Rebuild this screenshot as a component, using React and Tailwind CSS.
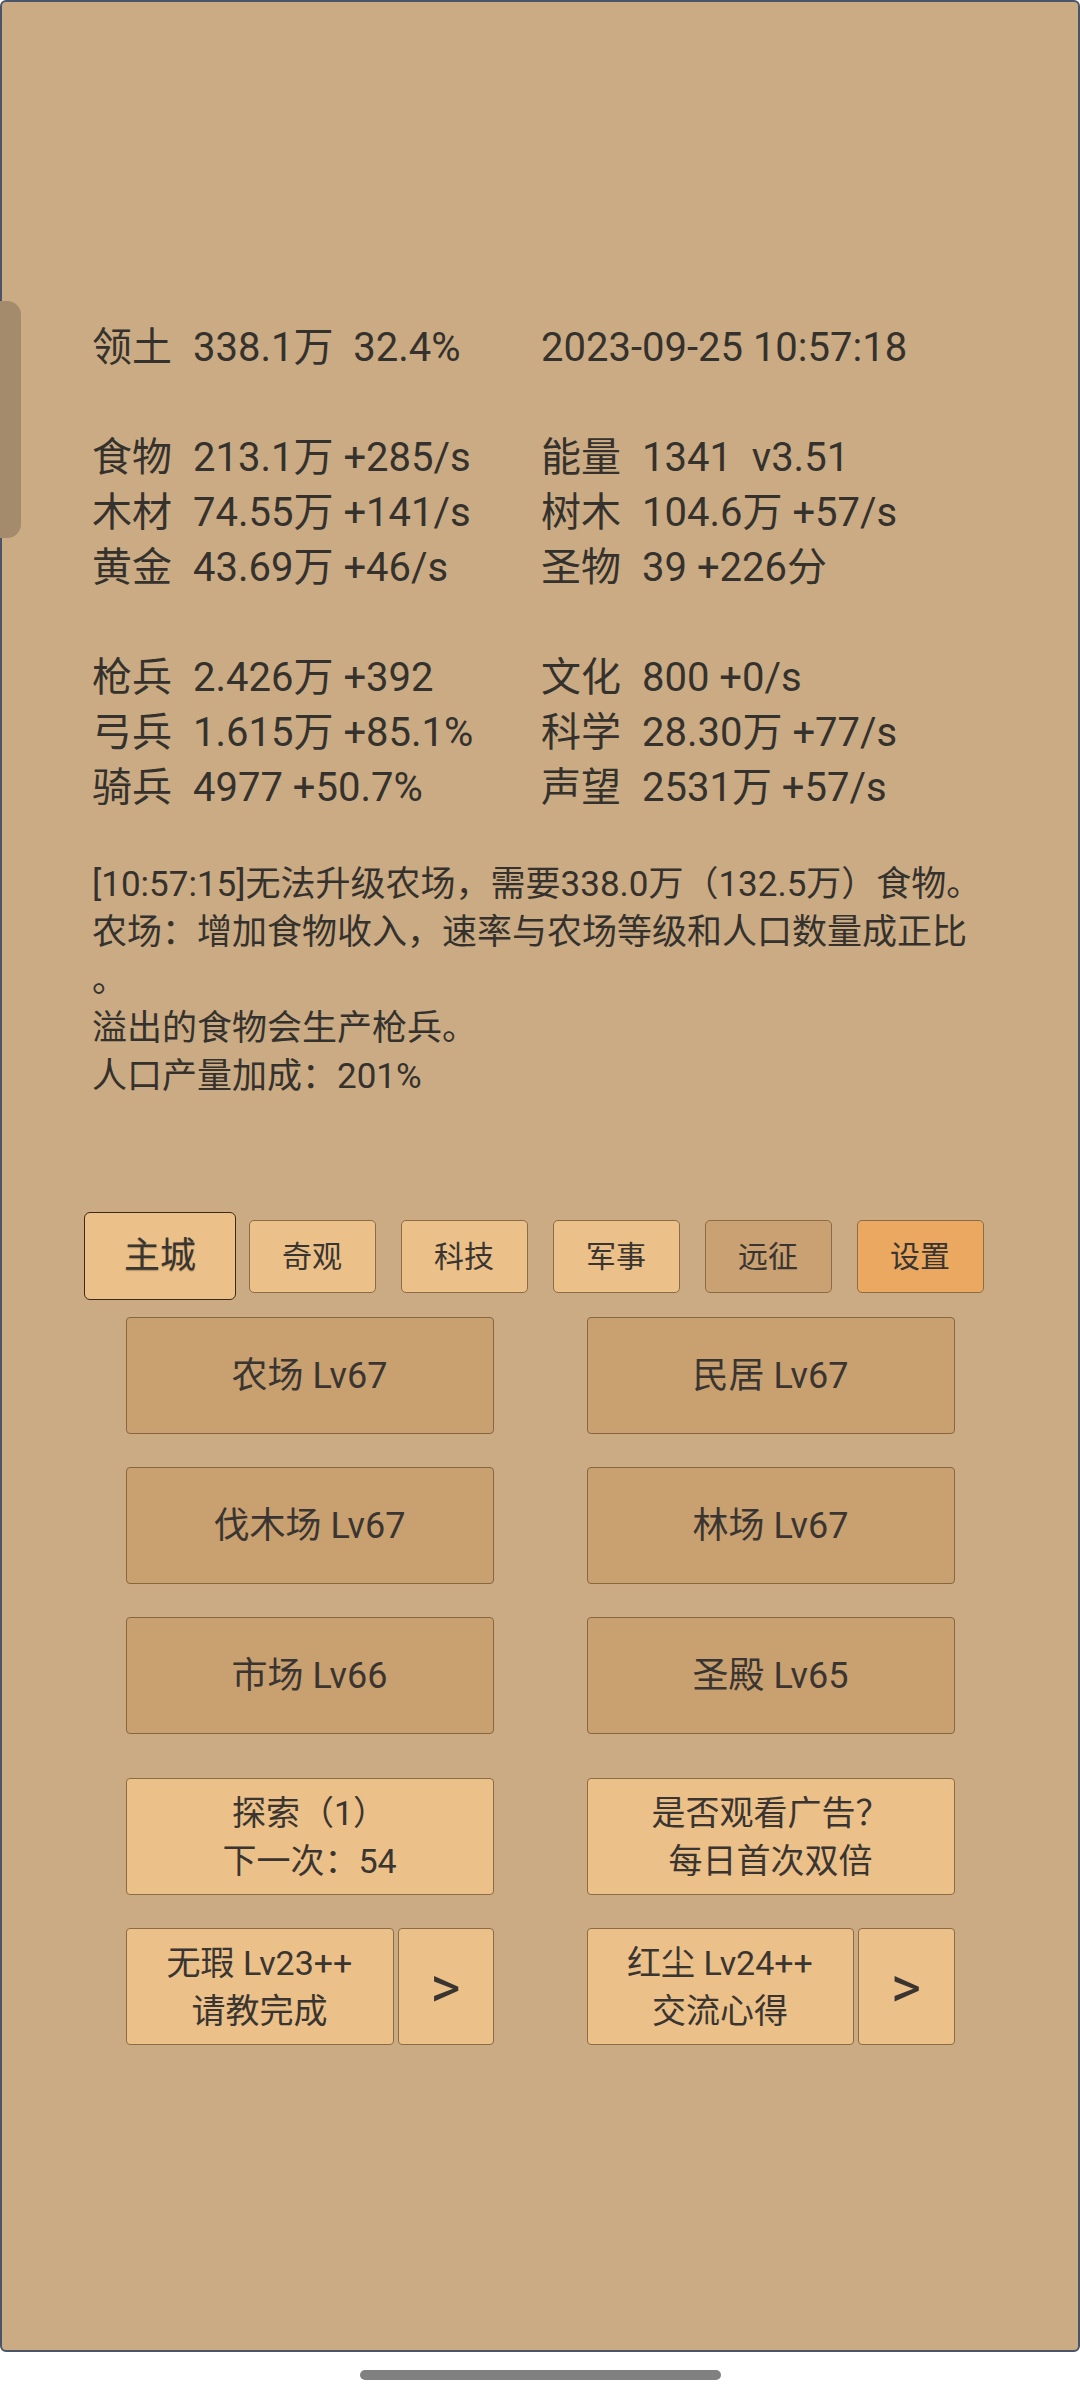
const FONT = "font-['Roboto','Noto_Sans_CJK_SC',sans-serif]"

const STATS = [
  [['领土', '338.1万  32.4%'], [null, '2023-09-25 10:57:18']],
  null,
  [['食物', '213.1万 +285/s'], ['能量', '1341  v3.51']],
  [['木材', '74.55万 +141/s'], ['树木', '104.6万 +57/s']],
  [['黄金', '43.69万 +46/s'], ['圣物', '39 +226分']],
  null,
  [['枪兵', '2.426万 +392'], ['文化', '800 +0/s']],
  [['弓兵', '1.615万 +85.1%'], ['科学', '28.30万 +77/s']],
  [['骑兵', '4977 +50.7%'], ['声望', '2531万 +57/s']],
]

const LOG = [
  '[10:57:15]无法升级农场，需要338.0万（132.5万）食物。',
  '农场：增加食物收入，速率与农场等级和人口数量成正比',
  '。',
  '溢出的食物会生产枪兵。',
  '人口产量加成：201%',
]

const TABS = [
  { label: '主城', active: true },
  { label: '奇观', bg: 'bg-[#ebc089]' },
  { label: '科技', bg: 'bg-[#ebc089]' },
  { label: '军事', bg: 'bg-[#ebc089]' },
  { label: '远征', bg: 'bg-[#c9a172]' },
  { label: '设置', bg: 'bg-[#eba861]' },
]

const BUILDINGS = ['农场 Lv67', '民居 Lv67', '伐木场 Lv67', '林场 Lv67', '市场 Lv66', '圣殿 Lv65']

function StatCell({ item }) {
  const [label, value] = item
  if (!label) return <span className="whitespace-pre">{value}</span>
  return (
    <div className="flex">
      <span className="w-[101px] shrink-0">{label}</span>
      <span className="whitespace-pre">{value}</span>
    </div>
  )
}

function LightButton({ children, className = '' }) {
  return (
    <div
      className={`h-[117px] bg-[#ebc089] border border-[#8c6c45] rounded-[4px] flex flex-col items-center justify-center text-[34px] leading-[48px] text-[#3a3530] whitespace-pre ${className}`}
    >
      {children}
    </div>
  )
}

export default function App() {
  return (
    <div className={`w-[1080px] h-[2400px] bg-white ${FONT}`}>
      <div className="relative h-[2352px] bg-[#cbab83] border-2 border-[#4a5568] rounded-[6px] text-[#35322e]">
        {/* side drawer handle */}
        <div className="absolute left-[-2px] top-[299px] w-[21px] h-[237px] bg-[#a38b6b] rounded-r-[14px]" />

        {/* stats */}
        <div className="pt-[318px] pl-[90px] text-[40px] leading-[55px]">
          {STATS.map((row, i) =>
            row ? (
              <div key={i} className="flex">
                <div className="w-[449px]">
                  <StatCell item={row[0]} />
                </div>
                <StatCell item={row[1]} />
              </div>
            ) : (
              <div key={i} className="h-[55px]" />
            )
          )}
        </div>

        {/* log */}
        <div className="mt-[46px] pl-[90px] text-[35px] leading-[48px]">
          {LOG.map((line, i) => (
            <div key={i} className="whitespace-nowrap">{line}</div>
          ))}
        </div>

        {/* tabs */}
        <div className="mt-[111px] h-[88px] flex justify-center items-center">
          {TABS.map((t) => (
            <div key={t.label} className="w-[152px] flex justify-center">
              {t.active ? (
                <div className="w-[153px] h-[88px] bg-[#ebc089] border-[1.5px] border-[#3d2a16] rounded-[6px] flex items-center justify-center text-[36px] text-[#3a3530] [text-shadow:0_1px_1px_rgba(60,40,20,0.35)]">
                  {t.label}
                </div>
              ) : (
                <div className={`w-[127px] h-[73px] ${t.bg} border border-[#8c6c45] rounded-[5px] flex items-center justify-center text-[30px] text-[#3a3530]`}>
                  {t.label}
                </div>
              )}
            </div>
          ))}
        </div>

        {/* buildings */}
        <div className="mt-[17px] grid grid-cols-[368px_368px] gap-x-[93px] gap-y-[33px] justify-center">
          {BUILDINGS.map((b) => (
            <div
              key={b}
              className="h-[117px] bg-[#c9a070] border border-[#86673f] rounded-[4px] flex items-center justify-center text-[36px] text-[#3a3530]"
            >
              {b}
            </div>
          ))}
        </div>

        {/* actions */}
        <div className="mt-[44px] grid grid-cols-[368px_368px] gap-x-[93px] gap-y-[33px] justify-center">
          <LightButton>
            <span>探索（1）</span>
            <span>下一次：54</span>
          </LightButton>
          <LightButton>
            <span>是否观看广告？</span>
            <span>每日首次双倍</span>
          </LightButton>
          <div className="flex gap-[4px]">
            <LightButton className="flex-1">
              <span>无瑕 Lv23++</span>
              <span>请教完成</span>
            </LightButton>
            <LightButton className="w-[96px] text-[58px]">
              <span>&gt;</span>
            </LightButton>
          </div>
          <div className="flex gap-[4px]">
            <LightButton className="flex-1">
              <span>红尘 Lv24++</span>
              <span>交流心得</span>
            </LightButton>
            <LightButton className="w-[97px] text-[58px]">
              <span>&gt;</span>
            </LightButton>
          </div>
        </div>
      </div>

      {/* home indicator */}
      <div className="mx-auto mt-[18px] w-[361px] h-[10px] rounded-full bg-[#808080]" />
    </div>
  )
}
